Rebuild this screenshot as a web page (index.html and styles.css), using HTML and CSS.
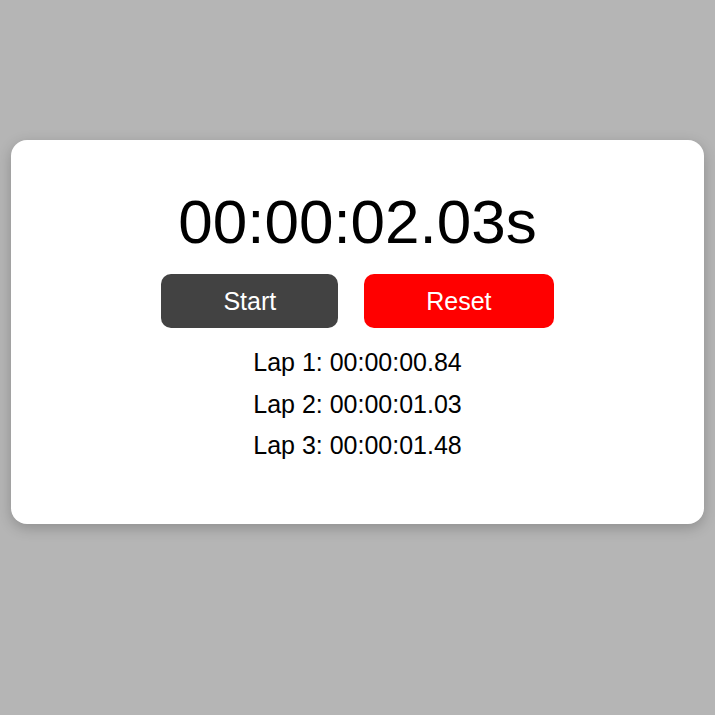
FILE: index.html
```html
<!DOCTYPE html>
<html>
<head>
<meta charset="utf-8">
<link rel="stylesheet" href="styles.css">
</head>
<body>
<div class="card">
  <div class="time">00:00:02.03s</div>
  <div class="controls">
    <button class="btn start">Start</button>
    <button class="btn reset">Reset</button>
  </div>
  <div class="laps">
    <div class="lap">Lap 1: 00:00:00.84</div>
    <div class="lap">Lap 2: 00:00:01.03</div>
    <div class="lap">Lap 3: 00:00:01.48</div>
  </div>
</div>
</body>
</html>
```
FILE: styles.css
```css
html, body {
  margin: 0;
  padding: 0;
}
body {
  background: #b5b5b5;
  font-family: "Liberation Sans", Arial, sans-serif;
  padding: 140px 11px 0;
  min-height: 715px;
  box-sizing: border-box;
}
.card {
  background: #ffffff;
  border-radius: 16px;
  box-shadow: 0 4px 14px rgba(0, 0, 0, 0.22);
  padding: 45px 20px 64px;
  display: flex;
  flex-direction: column;
  align-items: center;
}
.time {
  font-size: 62px;
  color: #000;
  line-height: 74px;
}
.controls {
  display: flex;
  gap: 26px;
  margin-top: 15px;
}
.btn {
  font-family: "Liberation Sans", Arial, sans-serif;
  font-size: 25px;
  line-height: 28px;
  color: #fff;
  border: none;
  border-radius: 10px;
  padding: 13px 62px;
}
.start {
  background: #424242;
}
.reset {
  background: #ff0000;
}
.laps {
  margin-top: 20px;
  display: flex;
  flex-direction: column;
  align-items: center;
  gap: 13px;
}
.lap {
  font-size: 25px;
  line-height: 28.5px;
  color: #000;
}
```
